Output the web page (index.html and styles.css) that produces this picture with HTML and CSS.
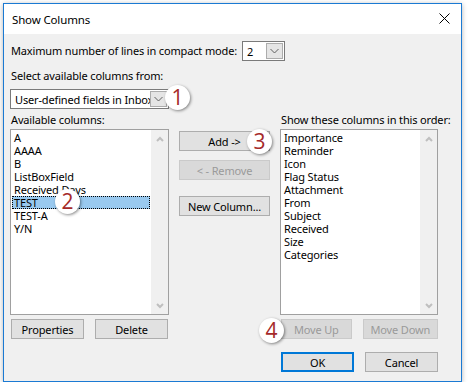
FILE: index.html
```html
<!DOCTYPE html>
<html lang="en">
<head>
  <meta charset="UTF-8" />
  <title>Show Columns</title>
  <link rel="stylesheet" href="styles.css">
</head>
<body>

  <div class="window">
    <div class="titlebar">
      <span class="title">Show Columns</span>
      <svg class="close" width="11" height="11" viewBox="0 0 11 11"><path d="M0.5 0.5 L10.5 10.5 M10.5 0.5 L0.5 10.5" stroke="#000" stroke-width="1" fill="none"/></svg>
    </div>

    <div class="dialog">
      <div class="row">
        <span class="label">Maximum number of lines in compact mode:</span>
        <div class="combo small">
          <span class="combo-text">2</span>
          <span class="drop"><svg width="9" height="6" viewBox="0 0 9 6"><path d="M0.5 1 L4.5 5 L8.5 1" stroke="#606060" fill="none"/></svg></span>
        </div>
      </div>

      <div class="label gap-top">Select available columns from:</div>
      <div class="combo wide">
        <span class="combo-text">User-defined fields in Inbox</span>
        <span class="drop"><svg width="9" height="6" viewBox="0 0 9 6"><path d="M0.5 1 L4.5 5 L8.5 1" stroke="#606060" fill="none"/></svg></span>
      </div>

      <div class="columns">
        <!-- available -->
        <div class="col">
          <div class="label">Available columns:</div>
          <div class="listbox">
            <ul class="items">
              <li>A</li>
              <li>AAAA</li>
              <li>B</li>
              <li>ListBoxField</li>
              <li>Received Days</li>
              <li class="selected">TEST</li>
              <li>TEST-A</li>
              <li>Y/N</li>
            </ul>
            <div class="scrollbar">
              <span class="arrow"><svg width="8" height="6" viewBox="0 0 8 6"><path d="M1 5 L4 2 L7 5" stroke="#bfbfbf" stroke-width="2" fill="none"/></svg></span>
              <span class="arrow"><svg width="8" height="6" viewBox="0 0 8 6"><path d="M1 1 L4 4 L7 1" stroke="#bfbfbf" stroke-width="2" fill="none"/></svg></span>
            </div>
          </div>
          <div class="btn-row">
            <button class="btn">Properties</button>
            <button class="btn">Delete</button>
          </div>
        </div>

        <!-- middle -->
        <div class="col middle">
          <button class="btn">Add -&gt;</button>
          <button class="btn" disabled>&lt; - Remove</button>
          <button class="btn new">New Column...</button>
        </div>

        <!-- shown -->
        <div class="col">
          <div class="label">Show these columns in this order:</div>
          <div class="listbox">
            <ul class="items">
              <li>Importance</li>
              <li>Reminder</li>
              <li>Icon</li>
              <li>Flag Status</li>
              <li>Attachment</li>
              <li>From</li>
              <li>Subject</li>
              <li>Received</li>
              <li>Size</li>
              <li>Categories</li>
            </ul>
            <div class="scrollbar">
              <span class="arrow"><svg width="8" height="6" viewBox="0 0 8 6"><path d="M1 5 L4 2 L7 5" stroke="#bfbfbf" stroke-width="2" fill="none"/></svg></span>
              <span class="arrow"><svg width="8" height="6" viewBox="0 0 8 6"><path d="M1 1 L4 4 L7 1" stroke="#bfbfbf" stroke-width="2" fill="none"/></svg></span>
            </div>
          </div>
          <div class="btn-row right">
            <button class="btn" disabled>Move Up</button>
            <button class="btn down" disabled>Move Down</button>
          </div>
          <div class="btn-row right footer">
            <button class="btn default">OK</button>
            <button class="btn">Cancel</button>
          </div>
        </div>
      </div>
    </div>

    <!-- callout badges -->
    <span class="badge b1">1</span>
    <span class="badge b2">2</span>
    <span class="badge b3">3</span>
    <span class="badge b4">4</span>
  </div>

</body>
</html>
```

FILE: styles.css
```css
* { box-sizing: border-box; margin: 0; padding: 0; }
body {
  font-family: 'Noto Sans', 'Open Sans', sans-serif;
  font-size: 11px;
  letter-spacing: -0.15px;
  color: #000;
  background: #fff;
  overflow: hidden;
}
.window {
  position: relative;
  margin: 3px 0 0 3px;
  width: 459px; height: 379px;
  border: 1px solid #1b7ad3;
  background: #f0f0f0;
  box-shadow: 0 1px 5px rgba(0,0,0,0.3);
}
.titlebar {
  height: 30px; background: #fff;
  display: flex; align-items: center; justify-content: space-between;
  padding: 0 11px 0 8px;
}
.title { font-size: 11.5px; }
.close { margin-top: -1px; }

.dialog { padding: 7px 6px 0 6px; }
.label { line-height: 14px; padding-left: 1px; white-space: nowrap; }
.row { display: flex; align-items: center; gap: 3px; height: 20px; }
.gap-top { margin-top: 8px; }

.combo {
  display: flex; align-items: center; height: 20px;
  background: #fff; border: 1px solid #7a7a7a;
}
.combo-text { flex: 1; padding-left: 4px; overflow: hidden; white-space: nowrap; }
.drop {
  width: 17px; height: 16px; margin-right: 1px;
  display: flex; align-items: center; justify-content: center;
  background: #e5e5e5; border: 1px solid #acacac;
}
.combo.small { width: 43px; margin-left: 2px; }
.combo.wide { width: 159px; margin-top: 6px; }

.columns {
  display: grid;
  grid-template-columns: 159px 91px 158px;
  column-gap: 10px;
  margin-top: 4px;
}
.col { display: flex; flex-direction: column; }
.listbox {
  display: flex; height: 186px; margin-top: 2px;
  background: #fff; border: 1px solid #a0a0a0;
}
.items { flex: 1; list-style: none; padding: 1px 0 0 1px; }
.items li { line-height: 13px; height: 13px; padding: 0 2px; white-space: nowrap; margin-right: 1px; }
.items li.selected { background: #99c9ef; outline: 1px dotted #000; outline-offset: -1px; }
.scrollbar {
  width: 17px; background: #f0f0f0;
  display: flex; flex-direction: column; justify-content: space-between;
}
.arrow { height: 17px; display: flex; align-items: center; justify-content: center; }

.btn {
  font: inherit; letter-spacing: inherit; height: 20px; width: 73px;
  background: #e1e1e1; border: 1px solid #adadad; color: #000;
}
.btn:disabled { background: #d9d9d9; border-color: #cacaca; color: #9a9a9a; }
.btn.default { border: 2px solid #0078d7; }
.btn.down { width: 78px; }
.btn-row { display: flex; gap: 11px; margin-top: 4px; padding-left: 1px; }
.btn-row.footer { margin-top: 13px; }

.middle { padding-top: 18px; gap: 9px; }
.middle .btn { width: 91px; }
.middle .new { margin-top: 7px; }

.badge {
  position: absolute;
  width: 25px; height: 25px; border-radius: 50%;
  background: #fff; box-shadow: 1px 1px 3px rgba(0,0,0,0.45);
  color: #a52a2a; font-family: 'Open Sans', sans-serif; font-size: 21px;
  letter-spacing: 0; line-height: 25px; text-align: center;
}
.b1 { left: 161px; top: 81px; }
.b2 { left: 51px; top: 185px; }
.b3 { left: 243px; top: 125px; }
.b4 { left: 255px; top: 314px; }
```
